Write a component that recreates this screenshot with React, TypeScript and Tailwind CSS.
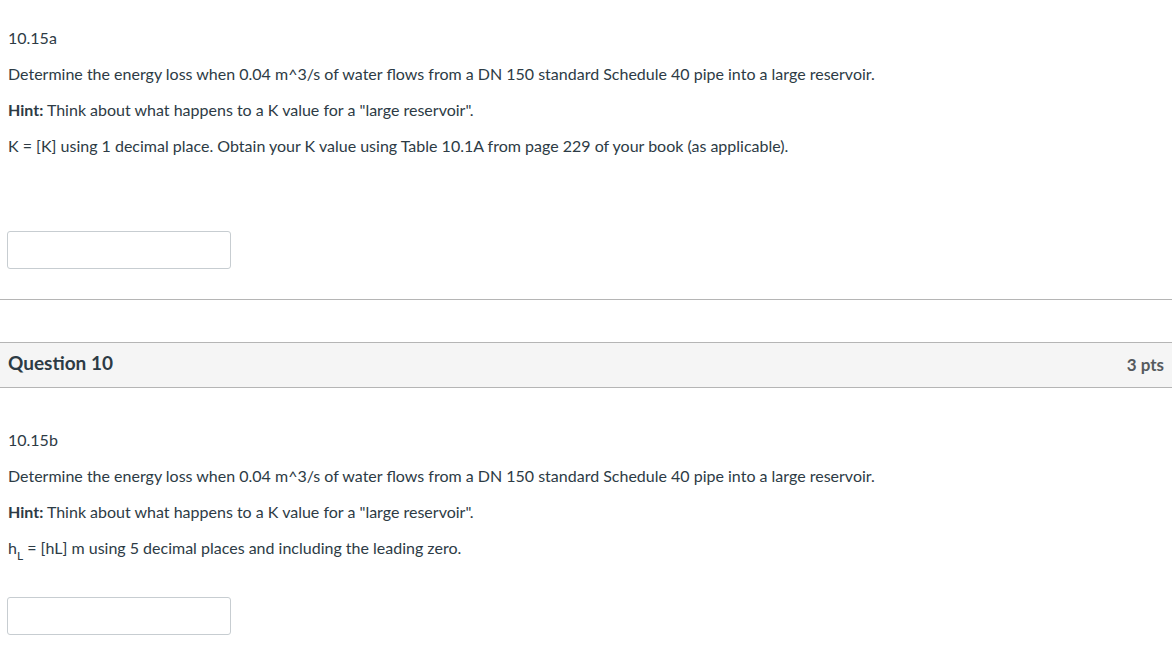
export default function App() {
  const text = "text-[16px] leading-[24px] text-[#2d3b45]";
  return (
    <div className="w-[1172px] h-[661px] bg-white overflow-hidden" style={{ fontFamily: "Lato, 'Noto Sans', sans-serif" }}>
      <div className="px-2 pt-[26px]">
        <p className={text}>10.15a</p>
        <p className={`${text} mt-[12px]`}>
          Determine the energy loss when 0.04 m^3/s of water flows from a DN 150 standard Schedule 40 pipe into a large reservoir.
        </p>
        <p className={`${text} mt-[12px]`}>
          <strong className="font-bold">Hint:</strong> Think about what happens to a K value for a "large reservoir".
        </p>
        <p className={`${text} mt-[12px]`}>K = [K] using 1 decimal place. Obtain your K value using Table 10.1A from page 229 of your book (as applicable).</p>
        <div className="mt-[73px] -ml-px w-[224px] h-[38px] border border-[#c7cdd1] rounded-[3px]" />
      </div>
      <div className="mt-[30px] border-t border-[#b5b5b5]" />
      <div className="mt-[42px] h-[46px] border-y border-[#b5b5b5] bg-[#f5f5f5] flex items-center justify-between px-2">
        <span className="text-[19px] font-bold text-[#2d3b45] pb-[3px]">Question 10</span>
        <span className="text-[17px] font-bold text-[#555a5e]">3 pts</span>
      </div>
      <div className="px-2 pt-[40px]">
        <p className={text}>10.15b</p>
        <p className={`${text} mt-[12px]`}>
          Determine the energy loss when 0.04 m^3/s of water flows from a DN 150 standard Schedule 40 pipe into a large reservoir.
        </p>
        <p className={`${text} mt-[12px]`}>
          <strong className="font-bold">Hint:</strong> Think about what happens to a K value for a "large reservoir".
        </p>
        <p className={`${text} mt-[12px]`}>
          h<sub className="text-[12px] leading-none align-[-3px]">L</sub> = [hL] m using 5 decimal places and including the leading zero.
        </p>
        <div className="mt-[37px] -ml-px w-[224px] h-[38px] border border-[#c7cdd1] rounded-[3px]" />
      </div>
    </div>
  );
}
